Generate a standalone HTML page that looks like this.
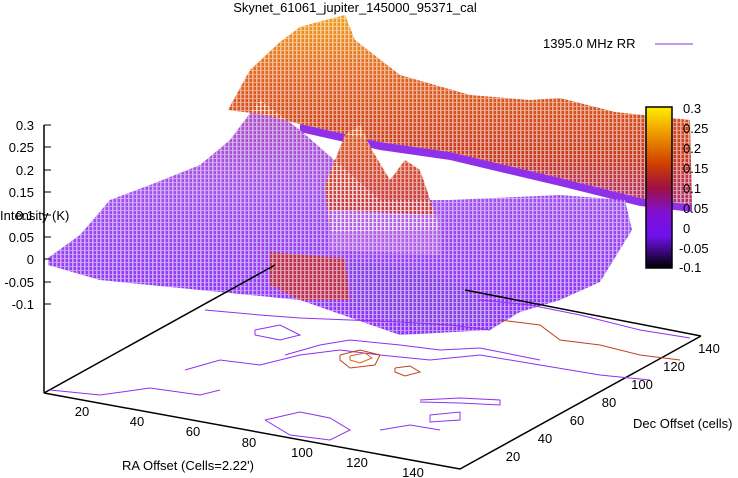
<!DOCTYPE html>
<html><head><meta charset="utf-8"><style>
body{margin:0;background:#fff}
svg{display:block}
text{font-family:"Liberation Sans",sans-serif;font-size:13px;fill:#000}
</style></head><body>
<svg width="738" height="478" viewBox="0 0 738 478" xmlns="http://www.w3.org/2000/svg">
<defs>
<linearGradient id="cb" x1="0" y1="0" x2="0" y2="1">
<stop offset="0" stop-color="#ffee00"/>
<stop offset="0.15" stop-color="#f0a000"/>
<stop offset="0.35" stop-color="#d04000"/>
<stop offset="0.5" stop-color="#a01040"/>
<stop offset="0.65" stop-color="#8010d0"/>
<stop offset="0.8" stop-color="#7010f0"/>
<stop offset="1" stop-color="#000000"/>
</linearGradient>
<linearGradient id="wall" x1="0" y1="0" x2="0" y2="1">
<stop offset="0" stop-color="#f0a020"/>
<stop offset="0.35" stop-color="#e06020"/>
<stop offset="0.75" stop-color="#c83a20"/>
<stop offset="1" stop-color="#b03070"/>
</linearGradient>
<linearGradient id="purp" x1="0" y1="0" x2="0" y2="1">
<stop offset="0" stop-color="#b050c0"/>
<stop offset="0.4" stop-color="#a050f0"/>
<stop offset="1" stop-color="#8a30f8"/>
</linearGradient>
<linearGradient id="peak" x1="0" y1="0" x2="0" y2="1">
<stop offset="0" stop-color="#e06020"/>
<stop offset="1" stop-color="#c03050"/>
</linearGradient>
<pattern id="mesh" width="4" height="4" patternUnits="userSpaceOnUse">
<rect x="0" y="0" width="1.5" height="4" fill="#fff" opacity="0.55"/>
<rect x="1.5" y="2" width="2.5" height="1" fill="#fff" opacity="0.45"/>
</pattern>
</defs>
<text x="355" y="12" text-anchor="middle">Skynet_61061_jupiter_145000_95371_cal</text>
<text x="543" y="48">1395.0 MHz RR</text>
<line x1="655" y1="44" x2="693" y2="44" stroke="#9030e0" stroke-width="1"/>

<g id="surf">
<polygon fill="url(#purp)" points="48,258 80,235 110,200 150,185 200,165 230,140 260,100 300,130 380,200 450,200 560,195 625,200 632,230 600,282 560,300 520,312 490,330 400,335 300,300 200,290 100,280 48,265"/>
<polygon fill="url(#wall)" points="228,110 250,70 280,42 300,27 318,22 345,15 355,40 400,75 470,95 530,100 560,98 615,112 690,120 692,205 640,198 560,178 450,152 380,142 300,124 260,114"/>
<polygon fill="#9030e8" points="300,124 380,142 450,152 560,178 640,198 692,205 692,212 640,206 560,186 450,160 380,150 300,132"/>
<polygon fill="url(#peak)" points="325,185 345,135 360,125 372,150 390,180 405,160 420,170 432,205 440,230 330,232"/>
<polygon fill="#b060e8" points="330,210 440,215 440,255 330,250"/>
<polygon fill="#c03040" opacity="0.9" points="270,252 345,258 350,300 300,300 270,285"/>
<polygon fill="#8a40e8" points="350,260 420,270 470,290 500,320 420,330 350,305"/>
</g>
<g fill="url(#mesh)">
<polygon points="48,258 80,235 110,200 150,185 200,165 230,140 260,100 300,130 380,200 450,200 560,195 625,200 632,230 600,282 560,300 520,312 490,330 400,335 300,300 200,290 100,280 48,265"/>
<polygon points="228,110 250,70 280,42 300,27 318,22 345,15 355,40 400,75 470,95 530,100 560,98 615,112 690,120 692,205 640,198 560,178 450,152 380,142 300,124 260,114"/>
<polygon points="325,185 345,135 360,125 372,150 390,180 405,160 420,170 432,205 440,230 330,232"/>
</g>

<g stroke="#000" stroke-width="1.5" fill="none">
<line x1="44" y1="125" x2="44" y2="393"/>
<polyline points="44,393 460,469 701,336"/>
<line x1="44" y1="393" x2="275" y2="265"/>
<line x1="465" y1="290" x2="701" y2="336"/>
</g>
<g stroke="#000" stroke-width="1">
<line x1="44" y1="125" x2="51" y2="125"/><line x1="44" y1="147" x2="51" y2="147"/><line x1="44" y1="170" x2="51" y2="170"/><line x1="44" y1="192" x2="51" y2="192"/><line x1="44" y1="215" x2="51" y2="215"/><line x1="44" y1="237" x2="51" y2="237"/><line x1="44" y1="259" x2="51" y2="259"/><line x1="44" y1="282" x2="51" y2="282"/><line x1="44" y1="304" x2="51" y2="304"/>
</g>
<g fill="none" stroke-width="1">
<polyline stroke="#9030f0" points="50,390 100,395 150,388 200,395 220,390"/>
<polyline stroke="#9030f0" points="185,370 220,360 260,365 300,355 340,350 380,355 430,360 480,355 540,365 600,375 650,380"/>
<polyline stroke="#9030f0" points="255,330 280,325 300,335 280,340 255,335 255,330"/>
<polyline stroke="#9030f0" points="205,310 260,315 300,318 350,320 400,322 450,325 490,330"/>
<polyline stroke="#9030f0" points="285,355 320,345 350,340 400,345 440,350 480,348 540,360"/>
<polyline stroke="#c04020" points="500,320 540,325 560,340 600,345 640,355 680,360"/>
<polyline stroke="#c04020" points="340,355 360,350 380,355 375,365 350,368 340,360 340,355"/>
<polyline stroke="#e06010" points="350,356 365,353 372,358 360,363 350,360 350,356"/>
<polyline stroke="#c04020" points="395,368 410,366 420,372 405,376 395,372 395,368"/>
<polyline stroke="#9030f0" points="265,420 300,412 330,418 350,430 330,440 290,435 265,420"/>
<polyline stroke="#9030f0" points="420,400 460,398 500,400 500,405 460,403 420,402"/>
<polyline stroke="#9030f0" points="430,415 460,412 460,420 430,422 430,415"/>
<polyline stroke="#9030f0" points="380,430 410,425 440,430"/>
<polyline stroke="#9030f0" points="480,300 530,305 580,315 640,330 690,338"/>
</g>

<rect x="646" y="107" width="26" height="161" fill="url(#cb)" stroke="#000" stroke-width="1.5"/>
<g>
<text x="683" y="113">0.3</text><text x="683" y="133">0.25</text><text x="683" y="153">0.2</text><text x="683" y="173">0.15</text><text x="683" y="193">0.1</text><text x="683" y="213">0.05</text><text x="683" y="233">0</text><text x="679" y="253">-0.05</text><text x="679" y="272">-0.1</text>
</g>
<g text-anchor="end">
<text x="34" y="130">0.3</text><text x="34" y="152">0.25</text><text x="34" y="175">0.2</text><text x="34" y="197">0.15</text><text x="34" y="220">0.1</text><text x="34" y="242">0.05</text><text x="34" y="264">0</text><text x="34" y="287">-0.05</text><text x="34" y="309">-0.1</text>
</g>
<text x="0" y="220">Intensity (K)</text>
<g text-anchor="middle">
<text x="82" y="416">20</text><text x="137" y="426">40</text><text x="193" y="436">60</text><text x="249" y="447">80</text><text x="302" y="457">100</text><text x="357" y="467">120</text><text x="413" y="477">140</text>
<text x="513" y="461">20</text><text x="545" y="443">40</text><text x="577" y="425">60</text><text x="609" y="407">80</text><text x="642" y="389">100</text><text x="674" y="371">120</text><text x="709" y="353">140</text>
</g>
<text x="122" y="470">RA Offset (Cells=2.22')</text>
<text x="633" y="428">Dec Offset (cells)</text>
</svg>
</body></html>
